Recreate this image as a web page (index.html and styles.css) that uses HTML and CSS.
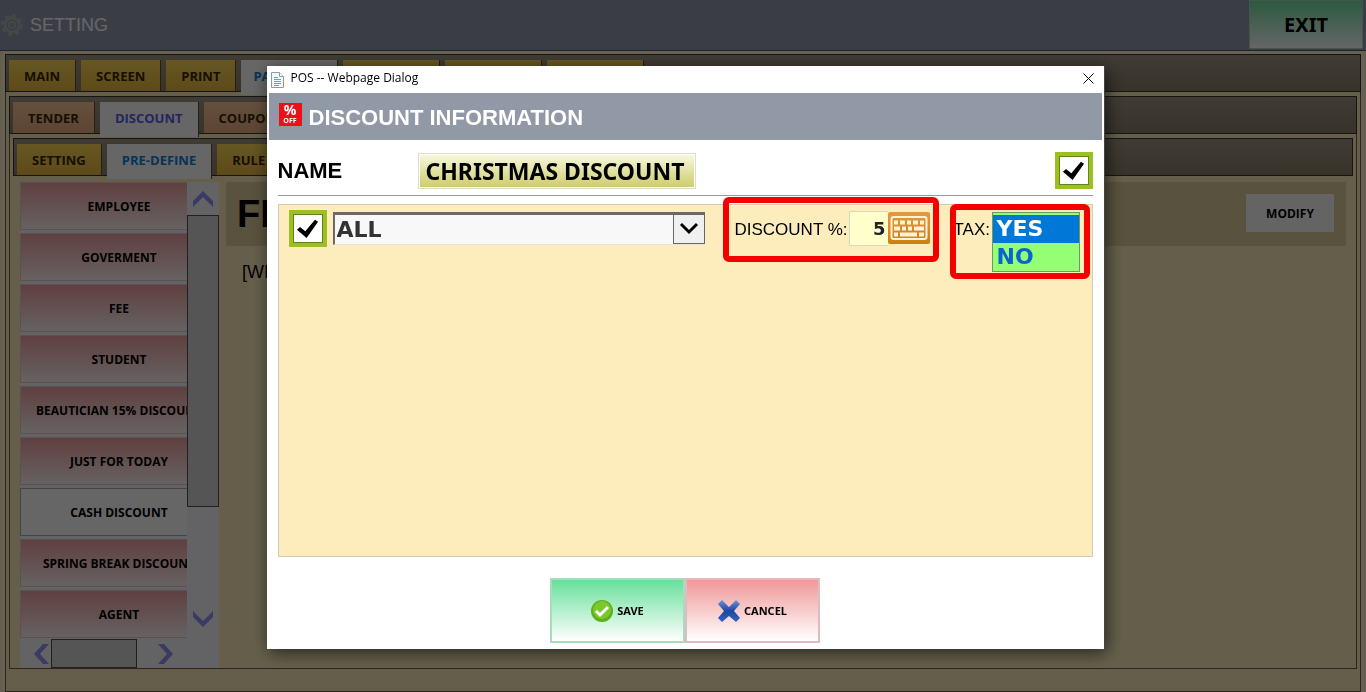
FILE: index.html
```html
<!DOCTYPE html>
<html lang="en">
<head>
    <meta charset="UTF-8">
    <meta name="viewport" content="width=device-width, initial-scale=1.0">
    <title>POS - Setting</title>
    <link rel="stylesheet" href="styles.css">
</head>
<body>
    <div class="page">
        <header class="topbar">
            <svg class="gear" viewBox="0 0 24 24" width="24" height="24">
                <circle cx="12" cy="12" r="9" fill="none" stroke="#a8b2ae" stroke-width="4" stroke-dasharray="4 3"/>
                <circle cx="12" cy="12" r="7" fill="none" stroke="#a8b2ae" stroke-width="3"/>
                <circle cx="12" cy="12" r="3" fill="none" stroke="#a8b2ae" stroke-width="2"/>
            </svg>
            <h1>SETTING</h1>
            <button class="exit">EXIT</button>
        </header>

        <div class="frame frame-main">
            <nav class="tabs">
                <button class="tab">MAIN</button>
                <button class="tab">SCREEN</button>
                <button class="tab">PRINT</button>
                <button class="tab active wide">PAYMENT</button>
                <button class="tab wide"></button>
                <button class="tab wide"></button>
                <button class="tab wide"></button>
            </nav>
            <div class="frame frame-sub">
                <nav class="tabs orange">
                    <button class="tab">TENDER</button>
                    <button class="tab active">DISCOUNT</button>
                    <button class="tab">COUPON</button>
                </nav>
                <div class="frame-inner">
                    <nav class="tabs">
                        <button class="tab">SETTING</button>
                        <button class="tab active">PRE-DEFINE</button>
                        <button class="tab">RULE</button>
                    </nav>
                    <div class="content">
                        <aside class="sidebar">
                            <div class="list-row">
                                <div class="list">
                                    <button class="item">EMPLOYEE</button>
                                    <button class="item">GOVERMENT</button>
                                    <button class="item">FEE</button>
                                    <button class="item">STUDENT</button>
                                    <button class="item">BEAUTICIAN 15% DISCOUNT</button>
                                    <button class="item">JUST FOR TODAY</button>
                                    <button class="item selected">CASH DISCOUNT</button>
                                    <button class="item">SPRING BREAK DISCOUNT</button>
                                    <button class="item">AGENT</button>
                                </div>
                                <div class="vscroll">
                                    <button class="arrow" aria-label="Scroll up">
                                        <svg viewBox="0 0 20 16" width="20" height="16"><path d="M0 10 10 0l10 10v6L10 6 0 16z" fill="#9492f0"/></svg>
                                    </button>
                                    <div class="thumb"></div>
                                    <button class="arrow down" aria-label="Scroll down">
                                        <svg viewBox="0 0 20 16" width="20" height="16"><path d="M0 6 10 16 20 6V0L10 10 0 0z" fill="#9492f0"/></svg>
                                    </button>
                                </div>
                            </div>
                            <div class="hscroll">
                                <button class="arrow" aria-label="Scroll left">
                                    <svg viewBox="0 0 15 20" width="15" height="20"><path d="M9 0 0 10l9 10h6L6 10 15 0z" fill="#9492f0"/></svg>
                                </button>
                                <div class="thumb"></div>
                                <button class="arrow" aria-label="Scroll right">
                                    <svg viewBox="0 0 15 20" width="15" height="20"><path d="M6 0l9 10-9 10H0L9 10 0 0z" fill="#9492f0"/></svg>
                                </button>
                            </div>
                        </aside>
                        <main class="detail">
                            <div class="detail-head">
                                <h2>FI</h2>
                                <button class="modify">MODIFY</button>
                            </div>
                            <p>[WI</p>
                        </main>
                    </div>
                </div>
            </div>
        </div>
    </div>

    <div class="overlay">
        <div class="dialog" role="dialog" aria-labelledby="dialog-title">
            <div class="titlebar">
                <svg viewBox="0 0 13 16" width="13" height="16">
                    <path d="M.5.5h8l4 4v11H.5z" fill="#f4faff" stroke="#8c9aa6"/>
                    <path d="M8.5.5v4h4" fill="#fff" stroke="#8c9aa6"/>
                    <path d="M3 5.500h4M3 7.500h7M3 9.500h7M3 11.500h7M3 13.500h5" stroke="#6f9cc4"/>
                </svg>
                <span>POS -- Webpage Dialog</span>
                <button class="close" aria-label="Close">
                    <svg viewBox="0 0 11 11" width="11" height="11"><path d="M.5.5l10 10M10.500.5l-10 10" stroke="#000"/></svg>
                </button>
            </div>

            <div class="dialog-head">
                <span class="off-icon"><b>%</b><b class="off">OFF</b></span>
                <h2 id="dialog-title">DISCOUNT INFORMATION</h2>
            </div>

            <form class="dialog-body">
                <div class="name-row">
                    <label for="name">NAME</label>
                    <input class="name-input" id="name" type="text" value="CHRISTMAS DISCOUNT">
                    <input class="check" type="checkbox" checked aria-label="Enable discount">
                </div>

                <div class="panel">
                    <input class="check" type="checkbox" checked aria-label="Apply to department">
                    <div class="dropdown">
                        <select aria-label="Department">
                            <option>ALL</option>
                        </select>
                        <svg class="dropdown-arrow" viewBox="0 0 32 30" width="32" height="30">
                            <rect x=".5" y=".5" width="31" height="29" fill="#f0f0f0" stroke="#666"/>
                            <path d="M8 10l8 8 8-8" fill="none" stroke="#000" stroke-width="3"/>
                        </svg>
                    </div>
                    <div class="field discount">
                        <label for="percent">DISCOUNT %:</label>
                        <input id="percent" type="text" value="5">
                        <button type="button" class="keyboard" aria-label="Keyboard">
                            <svg viewBox="0 0 42 32" width="42" height="32">
                                <rect x="3.500" y="5" width="35" height="22" rx="2" fill="none" stroke="#fff3dd" stroke-width="2"/>
                                <path d="M6 10.500h4m2 0h5m2 0h4m2 0h5m2 0h4M6 16.500h6m2 0h4m2 0h4m2 0h10M6 22.500h4m2 0h17m2 0h5" stroke="#fff3dd" stroke-width="4"/>
                            </svg>
                        </button>
                    </div>
                    <div class="field tax">
                        <label for="tax">TAX:</label>
                        <select id="tax" size="2">
                            <option selected>YES</option>
                            <option>NO</option>
                        </select>
                    </div>
                </div>

                <div class="actions">
                    <button type="button" class="save">
                        <svg viewBox="0 0 22 22" width="22" height="22">
                            <circle cx="11" cy="11" r="11" fill="#5fae1c"/>
                            <circle cx="11" cy="10" r="9" fill="#7cc82a"/>
                            <path d="M5 11l4 4 8-8" fill="none" stroke="#fff" stroke-width="3"/>
                        </svg>
                        SAVE
                    </button>
                    <button type="button" class="cancel">
                        <svg viewBox="0 0 22 22" width="22" height="22">
                            <defs>
                                <linearGradient id="cross" x1="0" y1="0" x2="0" y2="1">
                                    <stop offset="0" stop-color="#6f93dc"/>
                                    <stop offset=".5" stop-color="#1d479c"/>
                                    <stop offset="1" stop-color="#2f66c4"/>
                                </linearGradient>
                            </defs>
                            <path d="M4 0l7 7 7-7 4 4-6 7 6 7-4 4-7-6-7 6-4-4 6-7-6-7z" fill="url(#cross)"/>
                        </svg>
                        CANCEL
                    </button>
                </div>
            </form>
        </div>
    </div>
</body>
</html>
```
FILE: styles.css
```css
* {
    box-sizing: border-box;
}
body {
    margin: 0;
    background-color: #fdecbc;
    font-family: "Liberation Sans", Arial, sans-serif;
}
button {
    margin: 0;
    padding: 0;
    border: 0;
    color: #000;
    cursor: pointer;
}
h1, h2, p {
    margin: 0;
}

/* page behind the dialog */
.page {
    min-height: 100vh;
    display: flex;
    flex-direction: column;
    padding: 0 5px;
}
.topbar {
    display: flex;
    align-items: center;
    height: 51px;
    margin: 0 -5px 3px;
    padding-right: 3px;
    background-color: #939aaf;
    border-bottom: 1px solid #5a5a60;
    gap: 6px;
}
.topbar h1 {
    font-size: 18px;
    font-weight: normal;
    color: #fff;
}
.exit {
    align-self: flex-start;
    width: 114px;
    height: 49px;
    margin-left: auto;
    border: 1px solid #a8d8bc;
    background: linear-gradient(#70dfa0, #fff);
    font: bold 20px/24px "Noto Sans", sans-serif;
}
.frame {
    flex: 1;
    display: flex;
    flex-direction: column;
    border: 1px solid #705c48;
    padding: 0 3px;
}
.frame-main {
    outline: 3px solid #fff3d8;
}
.frame-sub {
    margin: 4px 0 22px;
}
.frame-inner {
    flex: 1;
    display: flex;
    flex-direction: column;
    margin-top: 4px;
}
.tabs {
    display: flex;
    gap: 5px;
    height: 38px;
    margin: -1px -4px 0;
    padding: 5px 3px 0;
    border: 1px solid #3c342c;
    background: linear-gradient(#a09686, #8a8068);
}
.frame-inner .tabs {
    margin: 0;
}
.tab {
    padding: 0 15px;
    border-right: 1px solid #5c5030;
    background: linear-gradient(#ffda58, #e8b840);
    color: #3a2800;
    font: bold 13px "Open Sans", sans-serif;
}
.orange .tab {
    background: linear-gradient(#f8c898, #e8ae80);
}
.tab.active {
    margin-bottom: -4px;
    padding-bottom: 4px;
    background: #fff;
    color: #1080d8;
}
.orange .tab.active {
    color: #5560f0;
}
.tab.wide {
    width: 97px;
    padding-left: 12px;
    text-align: left;
}
.content {
    flex: 1;
    display: flex;
    gap: 7px;
    padding: 6px 7px 0;
}
.sidebar {
    display: flex;
    flex-direction: column;
    width: 199px;
    background-color: #f8f6fa;
}
.list-row {
    flex: 1;
    display: flex;
}
.list {
    flex: 1;
    overflow: hidden;
    height: 457px;
}
.item {
    display: block;
    width: 198px;
    height: 48px;
    margin-bottom: 3px;
    border: 1px solid #e8c8c8;
    background: linear-gradient(#f0a0a0, #fff4f4);
    white-space: nowrap;
    font: bold 12px "Open Sans", sans-serif;
}
.item.selected {
    background: #fff;
    border-color: #aaa;
}
.vscroll {
    display: flex;
    flex-direction: column;
    width: 32px;
}
.vscroll .arrow {
    height: 33px;
    padding-top: 4px;
}
.vscroll .thumb {
    height: 292px;
}
.vscroll .down {
    height: 42px;
    margin-top: auto;
}
.thumb {
    border: 1px solid #505050;
    background-color: #d4d4d4;
}
.arrow {
    background: none;
}
.hscroll {
    display: flex;
    height: 29px;
    padding-left: 11px;
}
.hscroll .arrow {
    width: 20px;
    padding-top: 4px;
}
.hscroll .thumb {
    width: 86px;
    margin-right: 18px;
}
.detail {
    flex: 1;
}
.detail-head {
    display: flex;
    align-items: center;
    justify-content: space-between;
    height: 64px;
    padding: 0 12px 2px 11px;
    background-color: #decd9b;
}
.detail-head h2 {
    padding-top: 2px;
    font-size: 38px;
}
.modify {
    width: 88px;
    height: 38px;
    background-color: #fafafa;
    font: bold 12px "Open Sans", sans-serif;
}
.detail p {
    padding: 16px;
    font-size: 18px;
}

/* dialog */
.overlay {
    position: fixed;
    inset: 0;
    padding: 66px 0 0 5px;
    background-color: rgba(0, 0, 0, 0.6);
}
.dialog {
    max-width: 838px;
    margin: 0 auto;
    padding: 0 2px 6px;
    background-color: #fff;
    border-right: 1px solid #444;
    box-shadow: 2px 4px 16px rgba(0, 0, 0, 0.6);
}
.titlebar {
    display: flex;
    align-items: center;
    height: 27px;
    padding: 0 2px;
    gap: 7px;
    font: 12px/16px "Open Sans", sans-serif;
}
.titlebar span {
    padding-bottom: 4px;
}
.close {
    width: 22px;
    margin-left: auto;
    padding-bottom: 2px;
    background: none;
}
.close svg {
    display: block;
    margin: 0 auto;
}
.dialog-head {
    display: flex;
    align-items: center;
    height: 47px;
    padding: 0 10px;
    gap: 7px;
    background-color: #9299a6;
    color: #fff;
}
.dialog-head h2 {
    padding-top: 2px;
    font-size: 22px;
}
.off-icon {
    display: flex;
    flex-direction: column;
    align-items: center;
    width: 23px;
    height: 23px;
    margin-bottom: 4px;
    background-color: #ee1018;
    font: 14px/14px "Open Sans", sans-serif;
}
.off-icon .off {
    font-size: 7px;
    line-height: 8px;
}
.dialog-body {
    padding: 0 9px;
}
.name-row {
    display: flex;
    align-items: center;
    height: 56px;
    margin-bottom: 8px;
    padding-top: 6px;
    border-bottom: 1px solid #999;
}
.name-row label {
    width: 140px;
    font-size: 22px;
    font-weight: bold;
}
.name-input {
    width: 278px;
    height: 36px;
    padding: 0 7px;
    border: 1px solid #ddddc8;
    outline: 1px solid #fff;
    outline-offset: -2px;
    background: linear-gradient(#f8f8e0, #cccc68);
    font: bold 23px/30px "Noto Sans", sans-serif;
}
.check {
    appearance: none;
    width: 38px;
    height: 37px;
    margin: 0;
    padding: 5px 4px;
    border: 4px solid #9cc020;
    background-color: #fff;
    outline: 1px solid #66801c;
    outline-offset: -5px;
}
.check:checked::before {
    content: "";
    display: block;
    height: 100%;
    background-color: #000;
    clip-path: polygon(2% 57%, 16% 42%, 40% 64%, 84% 4%, 98% 14%, 46% 100%);
}
.name-row .check {
    margin-left: auto;
}
.panel {
    display: flex;
    align-items: flex-start;
    min-height: 353px;
    padding: 5px 12px 5px 10px;
    border: 1px solid #d0ccb8;
    background-color: #fdecbc;
}
.dropdown {
    position: relative;
    flex: 1;
    height: 33px;
    margin: 2px 30px 0 6px;
}
.dropdown select {
    appearance: none;
    width: 100%;
    height: 100%;
    padding: 0 2px;
    border: 2px solid #706868;
    border-width: 3px 0 1px 2px;
    border-bottom-color: #e8e4dc;
    border-radius: 0;
    background-color: #f8f8f8;
    color: #333;
    font: bold 22px "DejaVu Sans", sans-serif;
}
.dropdown-arrow {
    position: absolute;
    top: 2px;
    right: 0;
    pointer-events: none;
}
.field {
    position: relative;
    display: flex;
    align-items: flex-start;
    height: 34px;
    margin-top: 1px;
    font-size: 17px;
    line-height: 38px;
}
.field::after {
    content: "";
    position: absolute;
    border: 6px solid #f40000;
    border-radius: 6px;
    pointer-events: none;
}
.discount::after {
    inset: -14px -9px -17px -12px;
}
.tax::after {
    inset: -7px -10px -34px -4px;
}
.discount label {
    width: 114px;
}
.discount input {
    width: 39px;
    height: 35px;
    padding: 0 2px;
    border: 1px solid #d8d8c0;
    border-right: 0;
    background-color: #ffffcc;
    color: #222;
    text-align: right;
    font: bold 18px "DejaVu Sans", sans-serif;
}
.keyboard {
    height: 32px;
    margin-top: 1px;
    border-radius: 2px;
    background: linear-gradient(#e8983c, #cc8010);
}
.keyboard svg {
    display: block;
}
.tax {
    margin-left: 24px;
}
.tax label {
    width: 38px;
}
.tax select {
    width: 88px;
    height: 60px;
    margin-top: 1px;
    padding: 2px 0 0;
    border: 1px solid #6a9a60;
    border-radius: 0;
    background-color: #94ff74;
    overflow: hidden;
}
.tax option {
    min-height: 28px;
    padding: 1px 4px 0;
    color: #0a64d0;
    font: bold 22px/28px "DejaVu Sans", sans-serif;
}
.tax option:checked {
    background: linear-gradient(#0078d7, #0078d7);
    -webkit-text-fill-color: #fff;
}
.actions {
    display: flex;
    justify-content: center;
    margin-top: 21px;
}
.actions button {
    display: flex;
    align-items: center;
    justify-content: center;
    gap: 4px;
    width: 135px;
    height: 65px;
    border: 2px solid #a8dcbc;
    background: linear-gradient(#68e09c, #fff);
    font: bold 11px "Noto Sans", sans-serif;
}
.actions .cancel {
    border-color: #dcbcc0;
    background: linear-gradient(#f09898, #fff);
}
```
